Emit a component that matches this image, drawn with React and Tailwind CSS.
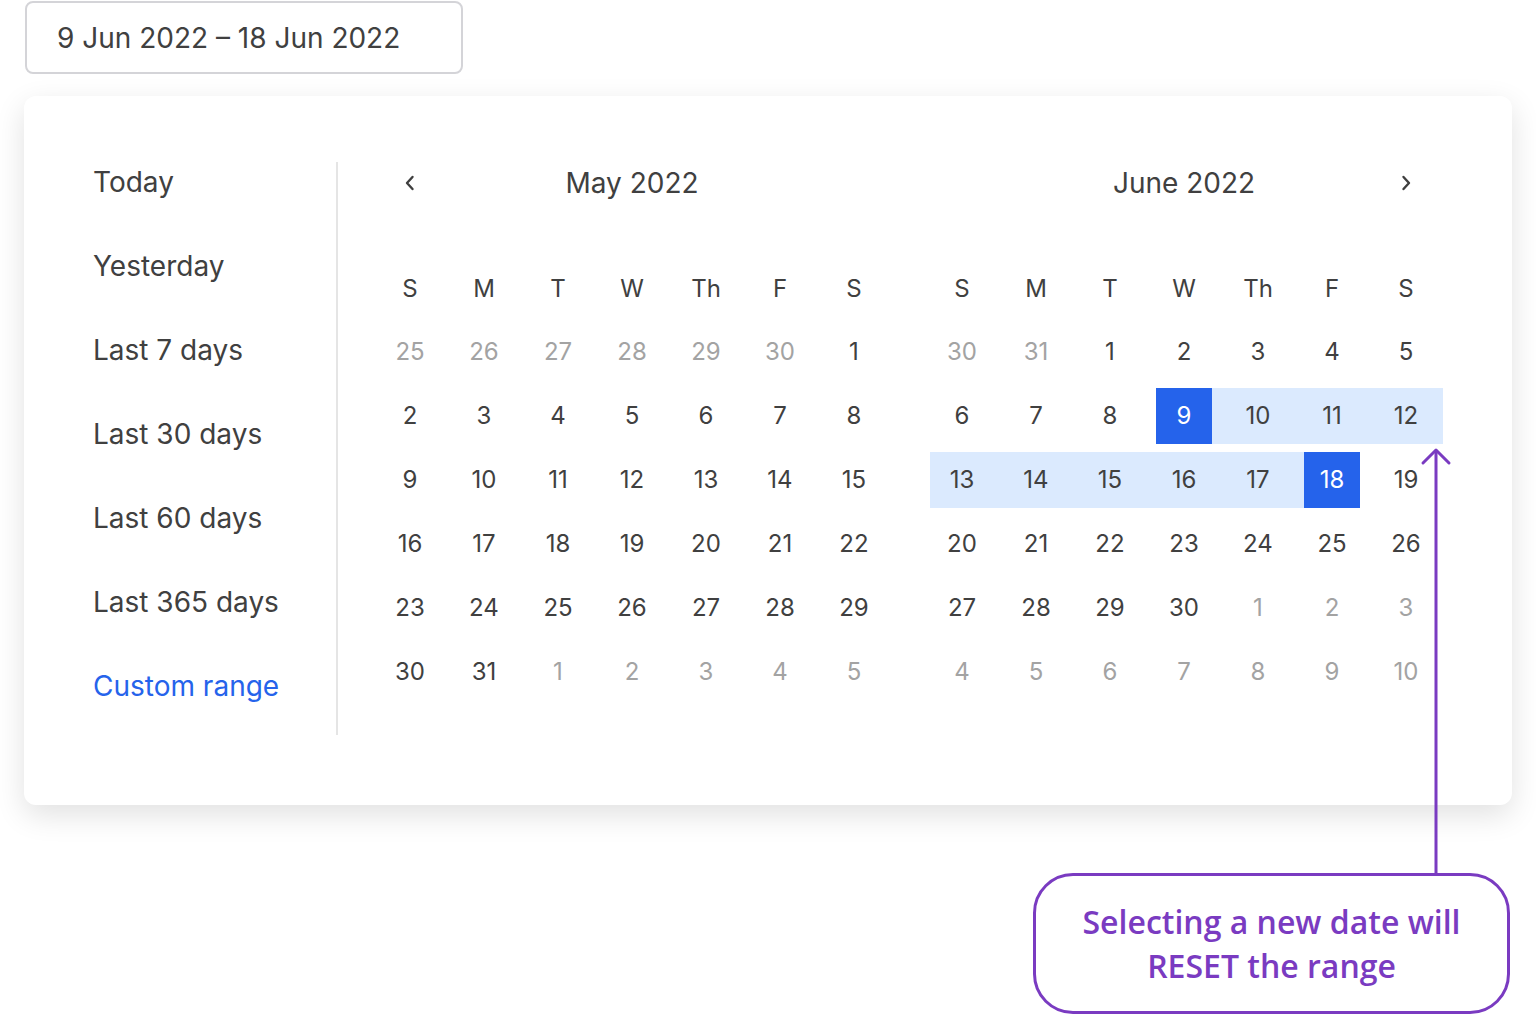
import React from "react";

const font = { fontFamily: "Inter, 'Noto Sans', sans-serif" };

const may = [
  [[25, 0], [26, 0], [27, 0], [28, 0], [29, 0], [30, 0], [1, 1]],
  [[2, 1], [3, 1], [4, 1], [5, 1], [6, 1], [7, 1], [8, 1]],
  [[9, 1], [10, 1], [11, 1], [12, 1], [13, 1], [14, 1], [15, 1]],
  [[16, 1], [17, 1], [18, 1], [19, 1], [20, 1], [21, 1], [22, 1]],
  [[23, 1], [24, 1], [25, 1], [26, 1], [27, 1], [28, 1], [29, 1]],
  [[30, 1], [31, 1], [1, 0], [2, 0], [3, 0], [4, 0], [5, 0]],
];

const june = [
  [[30, 0], [31, 0], [1, 1], [2, 1], [3, 1], [4, 1], [5, 1]],
  [[6, 1], [7, 1], [8, 1], [9, 1], [10, 1], [11, 1], [12, 1]],
  [[13, 1], [14, 1], [15, 1], [16, 1], [17, 1], [18, 1], [19, 1]],
  [[20, 1], [21, 1], [22, 1], [23, 1], [24, 1], [25, 1], [26, 1]],
  [[27, 1], [28, 1], [29, 1], [30, 1], [1, 0], [2, 0], [3, 0]],
  [[4, 0], [5, 0], [6, 0], [7, 0], [8, 0], [9, 0], [10, 0]],
];

const weekdays = ["S", "M", "T", "W", "Th", "F", "S"];

function Chevron({ dir }) {
  return (
    <svg width="12" height="16" viewBox="0 0 12 16" fill="none">
      {dir === "left" ? (
        <path d="M8.5 2 L3 8 L8.5 14" stroke="#3f3f3f" strokeWidth="2.4" strokeLinecap="round" strokeLinejoin="round" />
      ) : (
        <path d="M3.5 2 L9 8 L3.5 14" stroke="#3f3f3f" strokeWidth="2.4" strokeLinecap="round" strokeLinejoin="round" />
      )}
    </svg>
  );
}

function DayCell({ day, current, isJune, col }) {
  const inJune = isJune && current;
  const isStart = inJune && day === 9;
  const isEnd = inJune && day === 18;
  const inRange = inJune && day > 9 && day < 18;

  if (isStart || isEnd) {
    return (
      <div
        className={
          "h-14 w-[74px] flex items-center justify-center " +
          (isStart
            ? "bg-[linear-gradient(to_right,transparent_37px,#dbeafe_37px)]"
            : "bg-[linear-gradient(to_right,#dbeafe_37px,transparent_37px)]")
        }
      >
        <div className="h-14 w-14 bg-[#2563eb] flex items-center justify-center text-white text-[24px]">
          {day}
        </div>
      </div>
    );
  }

  let bg = "";
  if (inRange) {
    bg = col === 0 ? "bg-[linear-gradient(to_right,transparent_5px,#dbeafe_5px)]" : "bg-[#dbeafe]";
  }
  return (
    <div
      className={
        "h-14 w-[74px] flex items-center justify-center text-[24px] " +
        bg +
        " " +
        (current ? "text-[#404040]" : "text-[#a3a3a3]")
      }
    >
      {day}
    </div>
  );
}

function Month({ title, rows, isJune, left, right }) {
  return (
    <div className="flex flex-col w-[518px]">
      <div className="grid grid-cols-7 h-10 items-center">
        <div className="flex justify-center">{left && <Chevron dir="left" />}</div>
        <div className="col-span-5 text-center text-[28px] text-[#404040]">{title}</div>
        <div className="flex justify-center">{right && <Chevron dir="right" />}</div>
      </div>
      <div className="grid grid-cols-7 mt-[59px]">
        {weekdays.map((w, i) => (
          <div key={i} className="h-14 flex items-center justify-center text-[24px] text-[#404040]">
            {w}
          </div>
        ))}
      </div>
      <div className="flex flex-col gap-2 mt-[7px]">
        {rows.map((r, ri) => (
          <div key={ri} className="flex">
            {r.map(([d, c], ci) => (
              <DayCell key={ci} day={d} current={!!c} isJune={isJune} col={ci} />
            ))}
          </div>
        ))}
      </div>
    </div>
  );
}

export default function App() {
  const presets = ["Today", "Yesterday", "Last 7 days", "Last 30 days", "Last 60 days", "Last 365 days"];
  return (
    <div className="relative w-[1536px] h-[1016px] bg-white overflow-hidden" style={font}>
      <div className="pt-px pl-[25px]">
        <div className="w-[438px] h-[73px] border-2 border-[#d4d4d8] rounded-lg flex items-center pl-[30px] text-[28px] text-[#404040]">
          9 Jun 2022 – 18 Jun 2022
        </div>
      </div>

      <div className="ml-6 mt-[22px] w-[1488px] bg-white rounded-xl shadow-[0_10px_30px_rgba(0,0,0,0.12)] pt-[66px] pb-[70px] flex items-start">
        <div className="w-[314px] h-[573px] border-r-2 border-[#e5e5e5] pl-[69px] flex flex-col gap-[44px]">
          {presets.map((p) => (
            <div key={p} className="h-10 flex items-center text-[28px] text-[#404040]">
              {p}
            </div>
          ))}
          <div className="h-10 flex items-center text-[28px] text-[#2563eb]">Custom range</div>
        </div>
        <div className="pl-[35px] flex gap-[34px]">
          <Month title="May 2022" rows={may} isJune={false} left />
          <Month title="June 2022" rows={june} isJune right />
        </div>
      </div>

      <svg className="absolute left-0 top-0 pointer-events-none" width="1536" height="1016">
        <path d="M1436 450 L1436 875" stroke="#7a3bc1" strokeWidth="3" fill="none" />
        <path d="M1423 463 L1436 450 L1449 463" stroke="#7a3bc1" strokeWidth="3" fill="none" strokeLinecap="round" strokeLinejoin="round" />
      </svg>

      <div
        className="absolute left-[1033px] top-[873px] w-[477px] h-[141px] border-[3px] border-[#7a3bc1] rounded-[40px] bg-white flex flex-col items-center justify-center text-[32px] leading-[44px] font-semibold text-[#7a3bc1]"
        style={{ fontFamily: "'Open Sans', sans-serif" }}
      >
        <div>Selecting a new date will</div>
        <div>RESET the range</div>
      </div>
    </div>
  );
}
